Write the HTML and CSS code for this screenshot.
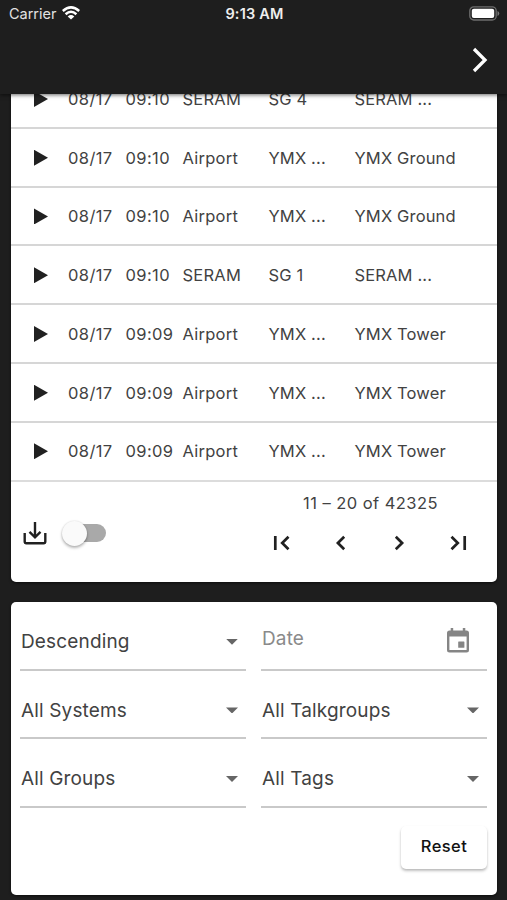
FILE: index.html
```html
<!DOCTYPE html>
<html lang="en">
<head>
<meta charset="utf-8">
<title>Calls</title>
<link rel="stylesheet" href="styles.css">
</head>
<body>
<header class="top">
  <div class="status">
    <div class="carrier"><span>Carrier</span>
      <svg class="wifi" width="18" height="14" viewBox="0 0 18 14" fill="none" stroke="#fff" stroke-width="2.5"><path d="M.8 5Q9-2.2 17.200 5M3.600 8.200Q9 3.300 14.400 8.200"/><path d="M9 13.600 5.700 10.400Q9 7.700 12.300 10.400Z" fill="#fff" stroke="none"/></svg>
    </div>
    <div class="clock">9:13 AM</div>
    <svg class="battery" width="31" height="15" viewBox="0 0 31 15"><rect x=".8" y=".8" width="26.4" height="13.2" rx="4" fill="none" stroke="#6e6e6e" stroke-width="1.3"/><rect x="2.8" y="2.7" width="22.4" height="9.4" rx="2" fill="#fff"/><path d="M28.5 5v5q1.8-.8 1.8-2.5T28.5 5Z" fill="#777"/></svg>
  </div>
  <div class="toolbar">
    <svg width="16" height="26" viewBox="0 0 16 26" fill="none" stroke="#fff" stroke-width="3.3"><path d="M2 2 13 13 2 24"/></svg>
  </div>
</header>
<main>
  <section class="card calls">
    <div class="row"><i class="play"></i><span>08/17</span><span>09:10</span><span>SERAM</span><span>SG 4</span><span>SERAM ...</span></div>
    <div class="row"><i class="play"></i><span>08/17</span><span>09:10</span><span>Airport</span><span>YMX ...</span><span>YMX Ground</span></div>
    <div class="row"><i class="play"></i><span>08/17</span><span>09:10</span><span>Airport</span><span>YMX ...</span><span>YMX Ground</span></div>
    <div class="row"><i class="play"></i><span>08/17</span><span>09:10</span><span>SERAM</span><span>SG 1</span><span>SERAM ...</span></div>
    <div class="row"><i class="play"></i><span>08/17</span><span>09:09</span><span>Airport</span><span>YMX ...</span><span>YMX Tower</span></div>
    <div class="row"><i class="play"></i><span>08/17</span><span>09:09</span><span>Airport</span><span>YMX ...</span><span>YMX Tower</span></div>
    <div class="row last"><i class="play"></i><span>08/17</span><span>09:09</span><span>Airport</span><span>YMX ...</span><span>YMX Tower</span></div>
    <div class="footer">
      <div class="download">
        <svg width="24" height="24" viewBox="0 0 24 24" fill="none" stroke="#212121" stroke-width="2.4"><path d="M12 1v15M6.500 10.800 12 16.300l5.500-5.500M1.700 12v8.500q0 1.700 1.700 1.700h17.200q1.700 0 1.700-1.700V12"/></svg>
        <div class="toggle"><i></i></div>
      </div>
      <div class="pager">
        <div class="range">11 – 20 of 42325</div>
        <div class="buttons">
          <svg width="18" height="16" viewBox="0 0 18 16"><path d="M2.300 1v14M15.500 1.700 9.200 8l6.300 6.300"/></svg>
          <svg width="18" height="16" viewBox="0 0 18 16"><path d="M12.200 1.700 5.900 8l6.300 6.300"/></svg>
          <svg width="18" height="16" viewBox="0 0 18 16"><path d="M5.800 1.700 12.100 8l-6.300 6.300"/></svg>
          <svg width="18" height="16" viewBox="0 0 18 16"><path d="M2.500 1.700 8.800 8l-6.300 6.300M15.700 1v14"/></svg>
        </div>
      </div>
    </div>
  </section>
  <section class="card filters">
    <div class="fields">
      <div class="field"><span>Descending</span><i class="arrow"></i></div>
      <div class="field date"><span>Date</span>
        <svg width="22" height="25" viewBox="0 0 22 25"><path fill="#858585" fill-rule="evenodd" d="M3.700 0h2.500v2.500h9.600V0h2.500v2.500h1.200Q22 2.500 22 5v17q0 2.500-2.500 2.500h-17Q0 24.500 0 22V5q0-2.500 2.500-2.500h1.200ZM2.400 8.500v13.600h17.200V8.500Z"/><rect x="11.200" y="13.600" width="6.200" height="6.200" rx=".5" fill="#858585"/></svg>
      </div>
      <div class="field"><span>All Systems</span><i class="arrow"></i></div>
      <div class="field"><span>All Talkgroups</span><i class="arrow"></i></div>
      <div class="field"><span>All Groups</span><i class="arrow"></i></div>
      <div class="field"><span>All Tags</span><i class="arrow"></i></div>
    </div>
    <button class="reset">Reset</button>
  </section>
</main>
</body>
</html>
```
FILE: styles.css
```css
* { box-sizing: border-box; }
body {
  margin: 0;
  height: 900px;
  overflow: hidden;
  background: #1e1e1e;
  color: #424242;
  font-family: Inter, "Liberation Sans", sans-serif;
}
svg { display: block; flex: none; }
.top {
  position: relative;
  z-index: 1;
  height: 94px;
  background: #1e1e1e;
  color: #fff;
  box-shadow: 0 1px 4px rgba(0, 0, 0, .6);
}
.status {
  display: grid;
  grid-template-columns: 1fr auto 1fr;
  align-items: center;
  height: 27px;
  padding: 0 7px 0 9px;
}
.carrier { display: flex; align-items: center; gap: 6px; font-size: 14.500px; letter-spacing: -.02px; color: #e2e2e2; }
.wifi { margin-top: -1px; }
.clock { font-size: 14.500px; font-weight: 600; letter-spacing: .2px; color: #eee; }
.battery { justify-self: end; }
.toolbar { display: flex; justify-content: flex-end; align-items: center; height: 65px; padding-right: 19px; }
.card { margin: 0 10px 0 11px; background: #fff; border-radius: 5px; box-shadow: 0 1px 3px rgba(0, 0, 0, .6); }
.calls { height: 512px; margin-top: -24px; overflow: hidden; }
.row {
  display: grid;
  grid-template-columns: 34px 57.500px 57px 86px 86px 1fr;
  align-items: center;
  height: 58.750px;
  padding-left: 23px;
  padding-top: 1px;
  border-bottom: 2px solid #d6d6d6;
  font-size: 16.500px;
  letter-spacing: .15px;
  white-space: nowrap;
}
.row span:nth-child(2), .row span:nth-child(3) { letter-spacing: .38px; }
.row span:nth-child(4) { letter-spacing: .25px; }
.row.last { height: 59.500px; padding-bottom: 1px; border-color: #dcdcdc; }
.play { width: 14px; height: 16px; background: #212121; clip-path: polygon(0 0, 100% 50%, 0 100%); }
.footer { display: flex; justify-content: space-between; padding: 9px 30px 0 12px; }
.download { display: flex; gap: 16px; align-items: center; height: 84px; }
.toggle { display: flex; align-items: center; width: 43px; height: 18px; border-radius: 9px; background: linear-gradient(90deg, transparent 10px, #a9a9a9 10px); }
.toggle i { width: 25px; height: 25px; margin-left: -1px; border-radius: 50%; background: #fafafa; box-shadow: 0 2px 3px rgba(0, 0, 0, .28), 0 0 2px rgba(0, 0, 0, .15); }
.range { font-size: 16.500px; line-height: 24px; letter-spacing: .45px; margin-left: 30px; }
.pager { width: 194px; }
.buttons { display: flex; justify-content: space-between; margin-top: 20px; }
.buttons path { fill: none; stroke: #212121; stroke-width: 2.700; }
.filters { height: 293px; margin-top: 20px; padding: 0 10px 0 9px; }
.fields { display: grid; grid-template-columns: 1fr 1fr; column-gap: 15px; }
.field {
  display: flex;
  align-items: center;
  justify-content: space-between;
  height: 68.600px;
  padding: 13px 8px 0 1px;
  border-bottom: 2px solid #c9c9c9;
  font-size: 19px;
  letter-spacing: .15px;
}
.date { padding: 7px 18px 0 1px; color: #8a8a8a; }
.date svg { margin-top: 3px; }
.arrow { width: 12px; height: 6px; background: #666; clip-path: polygon(0 0, 100% 0, 50% 100%); }
.reset {
  display: block;
  width: 86px;
  height: 43px;
  margin: 18px 0 0 auto;
  padding: 0 0 3px;
  border: 0;
  border-radius: 5px;
  background: #fff;
  color: #111;
  font: 500 16.500px Inter, sans-serif;
  letter-spacing: .4px;
  box-shadow: 0 2px 3px rgba(0, 0, 0, .24), 0 1px 2px rgba(0, 0, 0, .06);
}
```
